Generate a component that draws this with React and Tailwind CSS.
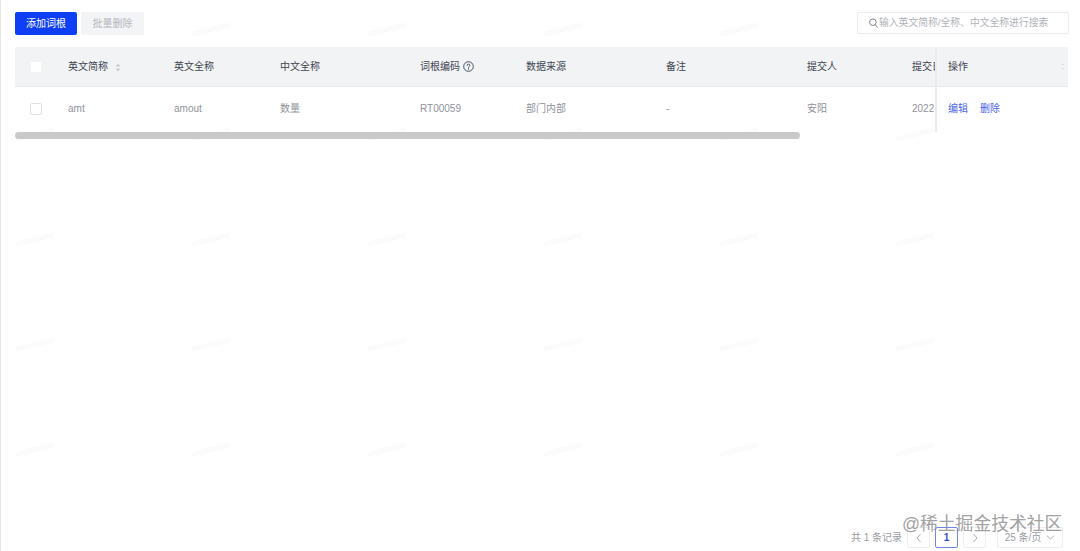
const FONT = "font-['Liberation_Sans','Noto_Sans_CJK_SC',sans-serif]";

const columns = [
  { w: 'w-[106px]', head: '英文简称', cell: 'amt', sort: true },
  { w: 'w-[106px]', head: '英文全称', cell: 'amout' },
  { w: 'w-[140px]', head: '中文全称', cell: '数量' },
  { w: 'w-[106px]', head: '词根编码', cell: 'RT00059', help: true },
  { w: 'w-[140px]', head: '数据来源', cell: '部门内部' },
  { w: 'w-[141px]', head: '备注', cell: '-' },
  { w: 'w-[105px]', head: '提交人', cell: '安阳' },
  { w: 'w-[120px]', head: '提交日期', cell: '2022-04-19' },
];

function Checkbox({ head }) {
  return <span className={`block w-[12px] h-[12px] rounded-[2px] bg-white border ${head ? 'border-[#f1f3f5]' : 'border-[#dfe1e6]'}`} />;
}

function SortIcon() {
  return (
    <svg width="6" height="9" viewBox="0 0 6 9" className="ml-[7px] mt-[1px]" fill="#c6c9cf">
      <path d="M3 0.5 5.4 3.5H0.6Z" />
      <path d="M3 8.5 0.6 5.5H5.4Z" />
    </svg>
  );
}

function HelpIcon() {
  return (
    <svg width="11" height="11" viewBox="0 0 11 11" className="ml-[3px]" fill="none" stroke="#374151" strokeWidth="0.9">
      <circle cx="5.5" cy="5.5" r="4.8" />
      <path d="M4.1 4.4c0-.8.6-1.3 1.4-1.3s1.4.5 1.4 1.2c0 1.1-1.4 1-1.4 2.1" strokeLinecap="round" />
      <path d="M5.5 7.6v.6" strokeLinecap="round" />
    </svg>
  );
}

function SearchIcon() {
  return (
    <svg width="9" height="10" viewBox="0 0 9 10" fill="none" stroke="#7f848e" strokeWidth="1">
      <circle cx="3.9" cy="4.2" r="3.3" />
      <path d="M6.3 6.8 8.6 9.4" strokeLinecap="round" />
    </svg>
  );
}

function Chevron({ d }) {
  return (
    <svg width="6" height="10" viewBox="0 0 6 10" fill="none" stroke="#a9adb5" strokeWidth="1">
      <path d={d} />
    </svg>
  );
}

const marks = Array.from({ length: 30 });

export default function App() {
  return (
    <div className={`relative w-[1080px] h-[551px] overflow-hidden bg-white border-l border-[#e6e6e6] flex flex-col ${FONT}`}>
      <div className="absolute inset-0 grid grid-cols-[repeat(6,176px)] auto-rows-[105px] pointer-events-none pl-[14px] pt-[27px]">
        {marks.map((_, i) => (
          <span key={i} className="block w-[40px] h-[5px] bg-[#fbfbfb] -rotate-[14deg] rounded-full" />
        ))}
      </div>

      <div className="relative flex justify-between items-start pl-[14px] pr-[11px] pt-[12px] h-[47px]">
        <div className="flex gap-[4px]">
          <button className="w-[62px] h-[23px] rounded-[2px] bg-[#0f3ff5] text-white text-[10px] leading-[23px] text-center">添加词根</button>
          <button className="w-[63px] h-[23px] rounded-[2px] bg-[#f3f4f6] text-[#b5b8be] text-[10px] leading-[23px] text-center">批量删除</button>
        </div>
        <div className="w-[212px] h-[22px] rounded-[2px] border border-[#e9ebee] bg-white flex items-center pl-[11px] gap-[1px] text-[9.8px] text-[#b0b3b9] whitespace-nowrap">
          <SearchIcon />
          <span>输入英文简称/全称、中文全称进行搜索</span>
        </div>
      </div>

      <div className="relative ml-[14px] w-[1053px] flex text-[10px]">
        <div className="w-[920px] overflow-hidden">
          <div className="flex h-[40px] bg-[#f1f3f5] border-b border-[#e8eaed] items-center text-[#3f4450]">
            <div className="w-[53px] shrink-0 pl-[15px]"><Checkbox head /></div>
            {columns.map((c) => (
              <div key={c.head} className={`${c.w} shrink-0 flex items-center`}>
                <span>{c.head}</span>
                {c.sort && <SortIcon />}
                {c.help && <HelpIcon />}
              </div>
            ))}
          </div>
          <div className="flex h-[45px] pb-[2px] items-center text-[#8f939b]">
            <div className="w-[53px] shrink-0 pl-[15px]"><Checkbox /></div>
            {columns.map((c) => (
              <div key={c.head} className={`${c.w} shrink-0`}>{c.cell}</div>
            ))}
          </div>
        </div>
        <div className="w-[133px] shrink-0 bg-white border-l-[2px] border-[#e9ebee]">
          <div className="flex h-[40px] bg-[#f1f3f5] border-b border-[#e8eaed] items-center justify-between pl-[11px] pr-[4px] text-[#3f4450]">
            <span>操作</span>
            <span className="text-[#c4c7cc] text-[9px]">:</span>
          </div>
          <div className="flex h-[45px] pb-[2px] items-center gap-[12px] pl-[11px] text-[#4a63e8]">
            <span>编辑</span>
            <span>删除</span>
          </div>
        </div>
      </div>

      <div className="relative ml-[14px] w-[785px] h-[7px] rounded-full bg-[#c9c9c9]" />

      <div className="relative mt-auto flex justify-end items-center pr-[17px] pb-[3px] text-[10px] text-[#9a9da4]">
        <span className="mr-[5px]">共 1 条记录</span>
        <span className="w-[23px] h-[21px] border border-[#eceef0] rounded-[2px] flex items-center justify-center mr-[5px]"><Chevron d="M4.5 1 1 5l3.5 4" /></span>
        <span className="w-[23px] h-[21px] border border-[#6f86ea] rounded-[2px] flex items-center justify-center mr-[5px] text-[#2f4fe0] font-bold">1</span>
        <span className="w-[23px] h-[21px] border border-[#eceef0] rounded-[2px] flex items-center justify-center mr-[11px]"><Chevron d="M1.5 1 5 5 1.5 9" /></span>
        <span className="w-[66px] h-[21px] border border-[#eceef0] rounded-[2px] flex items-center justify-center gap-[5px]">
          25 条/页
          <svg width="9" height="5" viewBox="0 0 9 5" fill="none" stroke="#a9adb5" strokeWidth="1"><path d="M.8.6 4.5 4 8.2.6" /></svg>
        </span>
      </div>

      <div className="absolute left-[901px] top-[512px] text-[17.8px] leading-[24px] text-[#8b8b8b] opacity-80 whitespace-nowrap">@稀土掘金技术社区</div>
    </div>
  );
}
